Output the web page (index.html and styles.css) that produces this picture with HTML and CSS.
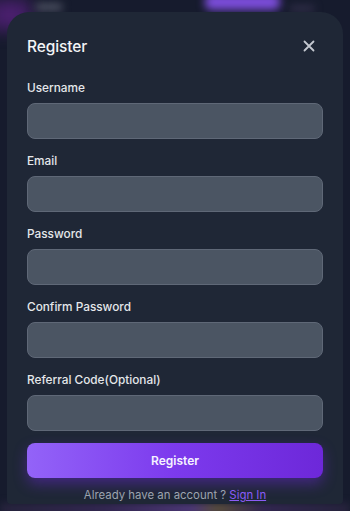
FILE: index.html
```html
<!DOCTYPE html>
<html lang="en">
<head>
<meta charset="utf-8">
<title>Register</title>
<link rel="stylesheet" href="styles.css">
</head>
<body>
<div class="backdrop">
  <span class="blob blob-purple"></span>
  <span class="blob blob-left"></span>
  <span class="blob blob-grey1"></span>
  <span class="blob blob-grey2"></span>
  <span class="blob blob-bottom"></span>
</div>
<div class="modal">
  <div class="modal-header">
    <h2 class="modal-title">Register</h2>
    <button class="close-btn" aria-label="Close">
      <svg width="12" height="12" viewBox="0 0 12 12"><path d="M1.5 1.5 L10.5 10.5 M10.5 1.5 L1.5 10.5" stroke="#c4c8d0" stroke-width="1.8" stroke-linecap="round" fill="none"/></svg>
    </button>
  </div>
  <form class="form">
    <div class="field">
      <label class="label">Username</label>
      <input class="input" type="text">
    </div>
    <div class="field">
      <label class="label">Email</label>
      <input class="input" type="email">
    </div>
    <div class="field">
      <label class="label">Password</label>
      <input class="input" type="password">
    </div>
    <div class="field">
      <label class="label">Confirm Password</label>
      <input class="input" type="password">
    </div>
    <div class="field">
      <label class="label">Referral Code(Optional)</label>
      <input class="input" type="text">
    </div>
    <button type="button" class="submit">Register</button>
    <p class="footer">Already have an account ? <a class="signin" href="#">Sign In</a></p>
  </form>
</div>
</body>
</html>
```
FILE: styles.css
```css
* { box-sizing: border-box; }
html, body {
  margin: 0;
  height: 511px;
  overflow: hidden;
}
body {
  background: #161b2d;
  font-family: Inter, "Noto Sans", sans-serif;
  position: relative;
}
.backdrop {
  position: absolute;
  inset: 0;
  overflow: hidden;
}
.blob {
  position: absolute;
  display: block;
  filter: blur(4px);
}
.blob-purple {
  left: 205px; top: -6px; width: 75px; height: 16px;
  background: #7c4ddb;
  border-radius: 6px;
}
.blob-left {
  left: -10px; top: 0px; width: 40px; height: 30px;
  background: #4a1f6e;
  filter: blur(8px);
}
.blob-grey1 {
  left: 36px; top: 4px; width: 26px; height: 6px;
  background: #5c6070;
}
.blob-grey2 {
  left: 290px; top: 6px; width: 24px; height: 5px;
  background: #3a3552;
}
.blob-bottom {
  left: 0; top: 504px; width: 350px; height: 10px;
  background: linear-gradient(90deg, #2a2540 0%, #3a2a5a 30%, #5b3f8a 55%, #6a5a40 62%, #3a2a5a 75%, #2a2540 100%);
}
.modal {
  position: relative;
  margin: 12px 7px 0;
  height: 492px;
  background: #1f2736;
  border-radius: 22px 22px 4px 4px;
  padding: 20px 20px 0;
  overflow: hidden;
}
.modal-header {
  display: flex;
  align-items: center;
  justify-content: space-between;
  height: 28px;
  margin-bottom: 20px;
}
.modal-title {
  margin: 0;
  font-size: 15.5px;
  font-weight: 500;
  color: #f3f4f6;
  letter-spacing: -0.1px;
}
.close-btn {
  background: none;
  border: none;
  padding: 0;
  margin-right: 8px;
  width: 12px;
  height: 12px;
  display: flex;
}
.form {
  display: flex;
  flex-direction: column;
}
.field {
  display: flex;
  flex-direction: column;
  margin-bottom: 14px;
}
.label {
  font-size: 11.8px;
  line-height: 16px;
  font-weight: 500;
  color: #e5e7eb;
  margin-bottom: 7px;
}
.input {
  height: 36px;
  background: #4b5563;
  border: 1px solid #5f6877;
  border-radius: 8px;
  outline: none;
}
.submit {
  margin-top: -2px;
  height: 35px;
  border: none;
  border-radius: 8px;
  background: linear-gradient(90deg, #9363f8 0%, #7c3aed 50%, #6d28d9 100%);
  color: #f5f3ff;
  font-family: inherit;
  font-size: 12px;
  font-weight: 600;
  box-shadow: 0 6px 14px rgba(109, 40, 217, 0.45);
}
.footer {
  margin: 9px 0 0;
  text-align: center;
  font-size: 11.4px;
  line-height: 16px;
  color: #9ca3af;
}
.signin {
  color: #8b5cf6;
  text-decoration: underline;
}
```
